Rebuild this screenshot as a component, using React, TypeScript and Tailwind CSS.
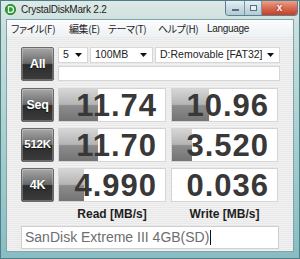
import React from 'react';

type Result = { label: string; read: string; readBar: number; write: string; writeBar: number };

const results: Result[] = [
  { label: 'Seq', read: '11.74', readBar: 39, write: '10.96', writeBar: 37 },
  { label: '512K', read: '11.70', readBar: 39, write: '3.520', writeBar: 20 },
  { label: '4K', read: '4.990', readBar: 25, write: '0.036', writeBar: 0 },
];

const btnClass =
  'w-[33px] h-[34px] shrink-0 flex items-center justify-center rounded-[2px] border border-[#6a6a6a] ' +
  'bg-[linear-gradient(180deg,#a8a8a8_0%,#6a6a6a_48%,#2c2c2c_52%,#3c3c3c_100%)] ' +
  'shadow-[inset_0_0_0_1px_rgba(255,255,255,0.25)] text-white font-bold font-["Liberation_Sans",Arial,sans-serif] ' +
  'tracking-[-0.3px] [text-shadow:0_1px_1px_rgba(0,0,0,0.6)]';

const Arrow = () => (
  <svg width="7" height="4" viewBox="0 0 7 4" className="shrink-0">
    <path d="M0 0 L7 0 L3.5 4 Z" fill="#111" />
  </svg>
);

const Select: React.FC<{ w: string; value: string }> = ({ w, value }) => (
  <div className={`${w} h-[16px] flex items-center justify-between pl-[4px] pr-[5px] bg-white border border-[#d6d6d6] text-[10.5px] text-[#222]`}>
    <span className="truncate">{value}</span>
    <Arrow />
  </div>
);

const ResultBox: React.FC<{ value: string; bar: number; w: string }> = ({ value, bar, w }) => (
  <div className={`${w} h-[34px] relative bg-white border border-[#d4d4d4] flex items-center justify-end pr-[8px]`}>
    {bar > 0 && (
      <div
        className="absolute left-0 top-0 bottom-0 bg-[linear-gradient(180deg,#d6d6d6_0%,#b4b4b4_48%,#8c8c8c_52%,#747474_100%)]"
        style={{ width: bar }}
      />
    )}
    <span className="relative text-[31px] leading-none font-bold tracking-[1px] text-[#383838] font-['Liberation_Sans',Arial,sans-serif]">
      {value}
    </span>
  </div>
);

export default function App() {
  return (
    <div className="w-[300px] h-[259px] flex flex-col border border-[#4f7f86] bg-[linear-gradient(180deg,#dde9e6_0%,#cadfdc_10%,#a3cdce_60%,#88bdc3_100%)] font-['Liberation_Sans',Arial,sans-serif] overflow-hidden">
      {/* Title bar */}
      <div className="h-[18px] shrink-0 flex items-start">
        <div className="flex items-center pl-[4px] pt-[3px] gap-[5px]">
          <svg width="11" height="11" viewBox="0 0 11 11">
            <circle cx="5.5" cy="5.5" r="5.2" fill="#2f9a3a" stroke="#1d6a25" strokeWidth="0.6" />
            <path d="M3.5 2.6 L3.5 8.4 L5.6 8.4 A2.9 2.9 0 0 0 5.6 2.6 Z" fill="none" stroke="#e8ffe0" strokeWidth="1.3" />
          </svg>
          <span className="text-[10px] tracking-[-0.2px] text-[#1a1a1a] leading-none">CrystalDiskMark 2.2</span>
        </div>
        <div className="ml-auto mr-[1px] flex h-[15px] rounded-b-[4px] overflow-hidden border border-t-0 border-[#5f7d8c]">
          <div className="w-[19px] flex items-center justify-center bg-[linear-gradient(180deg,#e6eff3_0%,#c9dbe3_50%,#b2cad6_100%)] border-r border-[#7b97a5]">
            <div className="w-[7px] h-[2px] bg-white border border-[#5a7080] mt-[4px]" />
          </div>
          <div className="w-[17px] flex items-center justify-center bg-[linear-gradient(180deg,#e6eff3_0%,#c9dbe3_50%,#b2cad6_100%)] border-r border-[#7b97a5]">
            <div className="w-[7px] h-[6px] border border-[#5a7080] bg-[#e8f0f4]" />
          </div>
          <div className="w-[35px] flex items-center justify-center bg-[linear-gradient(180deg,#eba08e_0%,#d86a52_50%,#c2402a_100%)]">
            <span className="text-white text-[10px] font-bold leading-none [text-shadow:0_0_2px_#7a1a0a]">x</span>
          </div>
        </div>
      </div>

      <div className="flex-1 mx-[5px] mb-[6px] flex flex-col border border-[#7fa4ac]">
        {/* Menu */}
        <div className="h-[16px] shrink-0 flex items-center pl-[4px] bg-[linear-gradient(180deg,#fbfcfd_0%,#eef2f5_100%)] text-[10px] text-[#1e1e1e] whitespace-nowrap font-['Noto_Sans_CJK_JP',sans-serif] [font-feature-settings:'palt']">
          <span className="w-[58px] tracking-[-0.4px]">ファイル(F)</span>
          <span className="w-[39px] tracking-[-0.4px]">編集(E)</span>
          <span className="w-[50px] tracking-[-0.4px]">テーマ(T)</span>
          <span className="w-[49px] tracking-[-0.4px]">ヘルプ(H)</span>
          <span className="font-['Liberation_Sans',Arial,sans-serif] tracking-[-0.3px]">Language</span>
        </div>

        {/* Client */}
        <div className="flex-1 flex flex-col pl-[14px] pr-[13px] pt-[11px] bg-[repeating-linear-gradient(180deg,#f2f2f2_0px,#f2f2f2_1px,#e8e8e8_1px,#e8e8e8_2px)]">
          <div className="flex gap-[4px]">
            <div className={`${btnClass} text-[13px]`}>All</div>
            <div className="flex flex-col gap-[3px]">
              <div className="flex gap-[2px]">
                <Select w="w-[30px]" value="5" />
                <Select w="w-[63px]" value="100MB" />
                <Select w="w-[125px]" value="D:Removable [FAT32]" />
              </div>
              <div className="w-[222px] h-[15px] bg-white border border-[#d6d6d6]" />
            </div>
          </div>

          <div className="flex flex-col gap-[6px] mt-[7px]">
            {results.map((r) => (
              <div key={r.label} className="flex">
                <div className={`${btnClass} ${r.label === '512K' ? 'text-[11.5px]' : 'text-[12.5px]'}`}>{r.label}</div>
                <div className="ml-[4px]">
                  <ResultBox value={r.read} bar={r.readBar} w="w-[108px]" />
                </div>
                <div className="ml-[5px]">
                  <ResultBox value={r.write} bar={r.writeBar} w="w-[107px]" />
                </div>
              </div>
            ))}
          </div>

          <div className="flex h-[24px] items-center pl-[37px] text-[12px] font-bold text-[#1e1e1e]">
            <div className="w-[108px] text-center">Read [MB/s]</div>
            <div className="w-[107px] ml-[5px] text-center">Write [MB/s]</div>
          </div>

          <div className="w-[258px] h-[23px] flex items-center pl-[3px] bg-white border border-[#cfcfcf] text-[14px] text-[#6e6e6e]">
            <span>SanDisk Extreme III 4GB(SD)</span>
            <span className="w-[1px] h-[15px] bg-[#111] ml-[1px]" />
          </div>
        </div>
      </div>
    </div>
  );
}
